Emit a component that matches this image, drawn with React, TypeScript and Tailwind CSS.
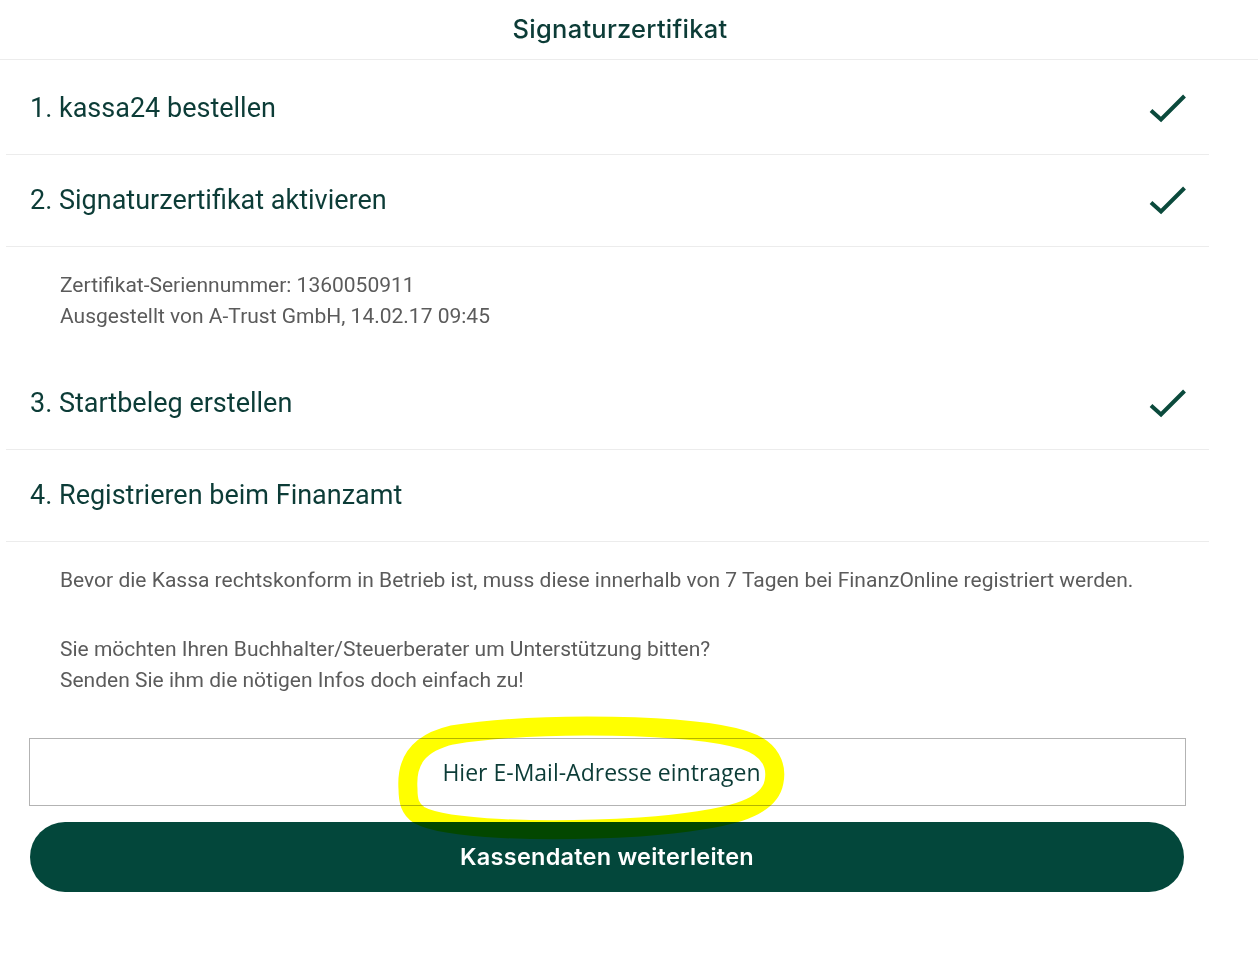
import { useState } from "react";

type Step = {
  title: string;
  done: boolean;
};

function CheckIcon() {
  return (
    <svg viewBox="0 0 38 30" aria-hidden="true" className="h-[30px] w-[38px] shrink-0 fill-none stroke-[#0b4a3c]" strokeWidth="4">
      <path d="M2 16.5 12 25.5 35.5 2" />
    </svg>
  );
}

function StepRow({ step, tall }: { step: Step; tall?: boolean }) {
  return (
    <div
      className={`flex items-center justify-between border-b border-[#ececec] pl-6 pr-[22px] ${tall ? "h-[95px] pt-[3px]" : "h-[92px]"}`}
    >
      <h2 className="text-[27px] font-normal text-[#0c3c37]">{step.title}</h2>
      {step.done && <CheckIcon />}
    </div>
  );
}

const steps: Step[] = [
  { title: "1. kassa24 bestellen", done: true },
  { title: "2. Signaturzertifikat aktivieren", done: true },
  { title: "3. Startbeleg erstellen", done: true },
  { title: "4. Registrieren beim Finanzamt", done: false },
];

export default function App() {
  const [email, setEmail] = useState("");

  return (
    <main className="min-h-screen bg-white font-['Roboto',sans-serif]">
      <header className="flex h-[60px] items-center justify-center border-b border-[#ececec] pr-[18px]">
        <h1 className="font-['Inter',sans-serif] text-[25.5px] font-medium tracking-[0.01em] text-[#0c3c37]">
          Signaturzertifikat
        </h1>
      </header>

      <div className="ml-[6px] w-[1203px]">
        <StepRow step={steps[0]} tall />
        <StepRow step={steps[1]} />
        <div className="pb-[26px] pl-[54px] pt-[23px] text-[21px] leading-[31px] text-[#5b5b5b]">
          <p>Zertifikat-Seriennummer: 1360050911</p>
          <p>Ausgestellt von A-Trust GmbH, 14.02.17 09:45</p>
        </div>
        <StepRow step={steps[2]} />
        <StepRow step={steps[3]} />

        <div className="pl-[54px] pt-[23px] text-[21px] leading-[31px] text-[#5b5b5b]">
          <p>Bevor die Kassa rechtskonform in Betrieb ist, muss diese innerhalb von 7 Tagen bei FinanzOnline registriert werden.</p>
          <p className="mt-[38px]">Sie möchten Ihren Buchhalter/Steuerberater um Unterstützung bitten?</p>
          <p>Senden Sie ihm die nötigen Infos doch einfach zu!</p>
        </div>

        <div className="relative flex flex-col gap-4 px-[23px] pt-[42px]">
          <input
            type="email"
            value={email}
            onChange={(e) => setEmail(e.target.value)}
            placeholder="Hier E-Mail-Adresse eintragen"
            className="h-[68px] w-[1157px] border border-[#b3b3b3] bg-white pr-3 text-center font-['Open_Sans',sans-serif] text-[23px] text-[#0c3c37] outline-none placeholder:text-[#0c3c37]"
          />
          <button
            type="button"
            className="ml-px h-[70px] w-[1154px] rounded-full bg-[#03473b] font-['Inter',sans-serif] text-[23.5px] font-semibold tracking-[0.01em] text-white"
          >
            Kassendaten weiterleiten
          </button>

          {/* yellow highlighter mark drawn over the screenshot */}
          <svg
            viewBox="0 0 400 140"
            aria-hidden="true"
            className="pointer-events-none absolute left-[386px] top-[15px] h-[140px] w-[400px] fill-none stroke-[#ffff00] mix-blend-multiply"
            strokeWidth="19"
            strokeLinecap="round"
            strokeLinejoin="round"
          >
            <path d="M16 78C14 50 26 32 60 24 150 10 300 13 352 29c28 9 33 27 30 42-5 27-44 38-134 45-100 6-196 2-221-12-9-6-11-14-11-26Z" />
          </svg>
        </div>
      </div>
    </main>
  );
}
